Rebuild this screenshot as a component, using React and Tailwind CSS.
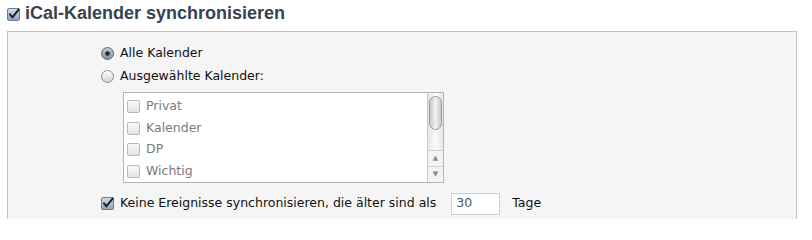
import React from 'react';

const calendars = ['Privat', 'Kalender', 'DP', 'Wichtig'];

function CheckBox({ checked, disabled }) {
  const id = checked ? 'cbOn' : disabled ? 'cbDis' : 'cbOff';
  return (
    <svg width="13" height="13" viewBox="0 0 13 13" className="shrink-0">
      <defs>
        <linearGradient id={id} x1="0" y1="0" x2="0" y2="1">
          <stop offset="0" stopColor={checked ? '#d3dbe3' : disabled ? '#fbfbfb' : '#ffffff'} />
          <stop offset="1" stopColor={checked ? '#93a3b3' : disabled ? '#e2e2e2' : '#d6d6d6'} />
        </linearGradient>
      </defs>
      <rect
        x="0.5"
        y="0.5"
        width="12"
        height="12"
        rx="1.5"
        fill={`url(#${id})`}
        stroke={checked ? '#6f7d8a' : disabled ? '#b8b8b8' : '#8e8e8e'}
      />
      {checked && (
        <path d="M3 6.3 L5.4 9.4 L11.6 1.6" fill="none" stroke="#17212c" strokeWidth="2" strokeLinecap="round" strokeLinejoin="round" />
      )}
    </svg>
  );
}

function Radio({ selected }) {
  return (
    <svg width="13" height="13" viewBox="0 0 13 13" className="shrink-0">
      <defs>
        <linearGradient id={selected ? 'rOn' : 'rOff'} x1="0" y1="0" x2="0" y2="1">
          <stop offset="0" stopColor={selected ? '#c3ccd6' : '#ffffff'} />
          <stop offset="1" stopColor={selected ? '#7f8e9c' : '#d2d2d2'} />
        </linearGradient>
      </defs>
      <circle cx="6.5" cy="6.5" r="6" fill={`url(#${selected ? 'rOn' : 'rOff'})`} stroke={selected ? '#5f6d7a' : '#8f8f8f'} />
      {selected && <circle cx="6.5" cy="6.5" r="2.3" fill="#1e2833" />}
    </svg>
  );
}

function ScrollBar() {
  return (
    <div className="w-[16px] border-l border-[#c8c8c8] bg-[#f3f3f3] flex flex-col">
      <div className="flex-1 px-[1px] pt-[3px] pb-[3px] bg-gradient-to-r from-[#e6e6e6] via-[#fafafa] to-[#e6e6e6]">
        <div className="h-[34px] rounded-full border border-[#9a9a9a] bg-gradient-to-r from-[#c9c9c9] via-[#f2f2f2] to-[#c9c9c9]" />
      </div>
      <div className="h-[16px] border-t border-[#d0d0d0] flex items-center justify-center text-[7px] text-[#8a8a8a] leading-none">▲</div>
      <div className="h-[16px] border-t border-[#d0d0d0] flex items-center justify-center text-[7px] text-[#8a8a8a] leading-none">▼</div>
    </div>
  );
}

export default function App() {
  return (
    <div className="w-[812px] h-[219px] overflow-hidden bg-white text-black" style={{ fontFamily: '"DejaVu Sans", sans-serif' }}>
      <div className="h-[31px] flex items-start pl-[7px] pt-[8px] gap-[5px]">
        <CheckBox checked />
        <h1
          className="text-[18px] font-bold leading-[13px] text-[#36434f] -mt-[1px]"
          style={{ fontFamily: '"Liberation Sans", Arial, sans-serif' }}
        >
          iCal-Kalender synchronisieren
        </h1>
      </div>

      <div className="ml-[7px] w-[790px] h-[200px] border border-[#c3c3c3] bg-[#f5f5f5] pl-[93px] pt-[10px] text-[12.5px] text-[#111]">
        <div className="h-[23px] flex items-center gap-[6px]">
          <Radio selected />
          <span>Alle Kalender</span>
        </div>
        <div className="h-[23px] flex items-center gap-[6px]">
          <Radio />
          <span>Ausgewählte Kalender:</span>
        </div>

        <div className="mt-[4px] ml-[22px] w-[321px] h-[91px] border border-[#b4b4b4] bg-white flex">
          <ul className="flex-1 pt-[3px] pl-[3px]">
            {calendars.map((name) => (
              <li key={name} className="h-[21.5px] flex items-center gap-[6px] text-[#7a7a7a]">
                <CheckBox disabled />
                <span>{name}</span>
              </li>
            ))}
          </ul>
          <ScrollBar />
        </div>

        <div className="mt-[9px] h-[23px] flex items-center">
          <CheckBox checked />
          <span className="ml-[6px]">Keine Ereignisse synchronisieren, die älter sind als</span>
          <div className="ml-[15px] w-[49px] h-[22px] border border-[#cfcfcf] bg-white pl-[4px] flex items-center text-[#3f5266]">30</div>
          <span className="ml-[12px]">Tage</span>
        </div>
      </div>
    </div>
  );
}
